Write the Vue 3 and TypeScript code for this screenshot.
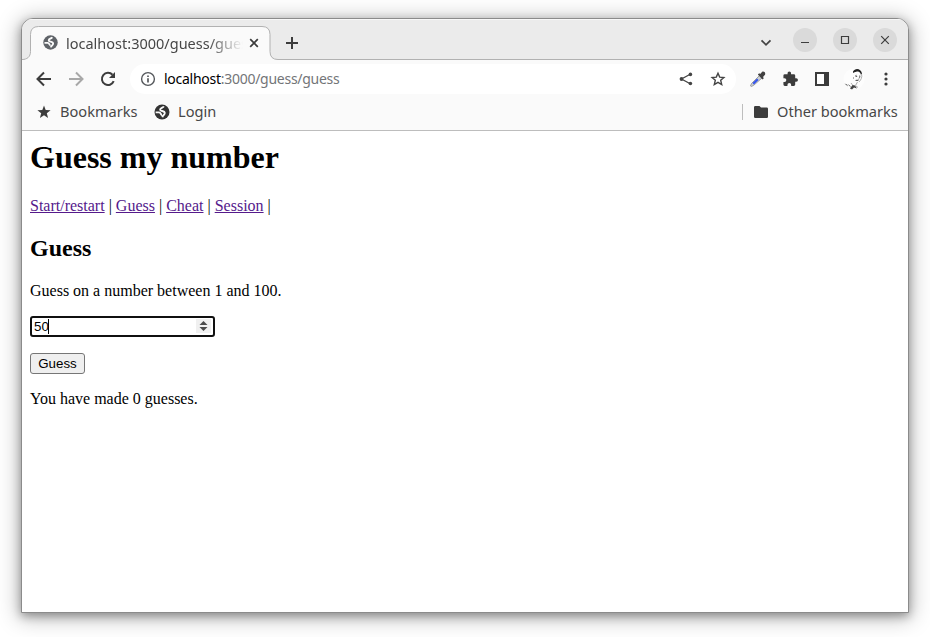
<script setup lang="ts">
import { ref } from 'vue'

const host = 'localhost'
const path = ':3000/guess/guess'
const guess = ref('50')
const guesses = ref(0)
const links: string[] = ['Start/restart', 'Guess', 'Cheat', 'Session']
const continents = 'M14.500 4.500C13 7 9.500 6.500 9.500 9C9.500 11.500 15.500 9.800 15.700 13.500C15.800 16 13 16 12.500 19M3.500 12.500H8C10.500 12.500 10.500 16 12 16'
</script>

<template>
  <div class="desktop">
    <div class="window">
      <header class="strip">
        <svg class="tab-shape" width="256" height="41" viewBox="0 0 256 41">
          <path d="M0 40.5C5 40.5 8.5 38 8.5 32.5V15.5Q8.500 7.500 16.5 7.500H240Q248 7.500 248 15.500V32.5Q248 40.500 256 40.500V41H0Z" fill="#fafafa" />
          <path d="M0 40.500C5 40.500 8.500 38 8.500 32.500V15.500Q8.500 7.500 16.500 7.500H240Q248 7.500 248 15.500V32.500Q248 40.500 256 40.500" fill="none" stroke="#b1b1b1" />
        </svg>
        <div class="tab">
          <svg width="17" height="17" viewBox="0 0 24 24"><circle cx="12" cy="12" r="10.200" fill="#5f6368" /><path :d="continents" fill="none" stroke="#fafafa" stroke-width="2.600" /></svg>
          <span class="title">{{ host }}{{ path }}</span>
          <svg class="close" width="10" height="10" viewBox="0 0 10 10"><path d="M1.200 1.200 8.800 8.800M8.800 1.200 1.200 8.800" stroke="#3c3c3c" stroke-width="1.700" /></svg>
        </div>
        <svg class="plus" width="12" height="12" viewBox="0 0 12 12"><path d="M6 0V12M0 6H12" stroke="#3c3c3c" stroke-width="2" /></svg>
        <div class="controls">
          <svg class="chev" width="12" height="8" viewBox="0 0 12 8"><path d="M1.500 1.300 6 5.800 10.500 1.300" fill="none" stroke="#444" stroke-width="1.800" /></svg>
          <span class="round"><svg width="24" height="24" viewBox="0 0 24 24"><path d="M8 14.500H16" stroke="#3d3d3d" /></svg></span>
          <span class="round"><svg width="24" height="24" viewBox="0 0 24 24"><path d="M8.500 8.500H15.500V15.500H8.500Z" fill="none" stroke="#3d3d3d" stroke-width="1.200" /></svg></span>
          <span class="round"><svg width="24" height="24" viewBox="0 0 24 24"><path d="M8.200 8.200 15.800 15.800M15.800 8.200 8.200 15.800" stroke="#3d3d3d" stroke-width="1.200" /></svg></span>
        </div>
      </header>

      <nav class="toolbar">
        <div class="nav-icons">
          <svg width="16" height="16" viewBox="0 0 16 16"><path d="M15 8H2M8 1.500 1.500 8 8 14.500" fill="none" stroke="#3c3c3c" stroke-width="2" /></svg>
          <svg width="16" height="16" viewBox="0 0 16 16"><path d="M1 8H14M8 1.500 14.500 8 8 14.500" fill="none" stroke="#a8a8a8" stroke-width="2" /></svg>
          <svg width="16" height="16" viewBox="0 0 16 16"><path d="M13.700 10.200A6.100 6.100 0 1 1 12.500 3.800" fill="none" stroke="#3c3c3c" stroke-width="2" /><path d="M15 1V7H9Z" fill="#3c3c3c" /></svg>
        </div>
        <div class="address">
          <svg width="16" height="16" viewBox="0 0 16 16"><circle cx="8" cy="8" r="6.400" fill="none" stroke="#55585c" stroke-width="1.400" /><path d="M8 7.200V11.400M8 4.400V6" stroke="#55585c" stroke-width="1.700" /></svg>
          <span class="url"><b>{{ host }}</b>{{ path }}</span>
          <svg class="share" width="16" height="16" viewBox="0 0 16 16"><path d="M12.200 3.300 3.500 8 12.200 12.700" fill="none" stroke="#444" stroke-width="1.300" /><circle cx="12.400" cy="3.400" r="1.800" fill="#444" /><circle cx="3.500" cy="8" r="1.900" fill="#444" /><circle cx="12.400" cy="12.500" r="1.800" fill="#444" /></svg>
          <svg width="16" height="16" viewBox="0 0 16 16"><path d="M8 2.200 9.700 6.100 13.900 6.500 10.700 9.300 11.700 13.500 8 11.300 4.300 13.500 5.300 9.300 2.100 6.500 6.300 6.100Z" fill="none" stroke="#444" stroke-width="1.400" /></svg>
        </div>
        <div class="extensions">
          <svg width="18" height="18" viewBox="0 0 18 18">
            <path d="M10.500 5.500 13 8 5 15 2.500 16.500 1.500 16 2.500 13.500Z" fill="#cbd0d4" stroke="#8b8b8b" stroke-width=".8" />
            <path d="M8.800 9.300 4.200 13.800" stroke="#3152ef" stroke-width="2" />
            <path d="M8.800 4.600 10.200 3.300 11.200 4 13 2C14.500.700 17 2.500 16 4.800L14 7 14.800 8.200 13.500 9.400Z" fill="#414141" />
          </svg>
          <svg width="18" height="18" viewBox="-1.500 -1 26 26"><path d="M20.500 11H19V7a2 2 0 0 0-2-2h-4V3.500a2.500 2.500 0 0 0-5 0V5H4a2 2 0 0 0-2 2v3.800h1.500a2.700 2.700 0 0 1 0 5.400H2V20a2 2 0 0 0 2 2h3.800v-1.500a2.700 2.700 0 0 1 5.400 0V22H17a2 2 0 0 0 2-2v-4h1.500a2.500 2.500 0 0 0 0-5z" fill="#3c3c3c" /></svg>
          <svg width="18" height="18" viewBox="0 0 18 18"><path d="M2 2H16V16H2Z" fill="#3c3c3c" /><path d="M4 4H11V14H4Z" fill="#fff" /></svg>
          <svg class="avatar" width="22" height="22" viewBox="0 0 22 22">
            <circle cx="11" cy="11" r="10.500" fill="#fdfdfd" />
            <path d="M10 3.500C12-.5 18 0 19 5.500L18 7C17.500 4.500 16 3 14 3.500L11.500 4.200 10 5Z" fill="#222" />
            <path d="M18.500 6C19.500 9 18 12 16 14M12 7.600 14 7.200M16 7.500 17.500 8M10.500 9 10.500 11M12 12.500 15.500 12M17 8 15 13" fill="none" stroke="#b0b0b0" />
            <path d="M12.500 8.400H14.200M16 9H17.200M13 12.400H15" stroke="#555" />
            <path d="M1.500 15.500 4 16.500 5 18.500ZM4.500 16 7 17.500 8 19.500ZM7 20.500 9.500 17 12 17.500 14 20.500 11 19.500 9 21.500Z" fill="#444" />
            <path d="M8 15 9.500 17M14.500 14 12.500 17.500 15 19.500" fill="none" stroke="#aaa" />
          </svg>
          <svg class="dots" width="4" height="14" viewBox="0 0 4 14"><circle cx="2" cy="2" r="1.600" fill="#3c3c3c" /><circle cx="2" cy="7" r="1.600" fill="#3c3c3c" /><circle cx="2" cy="12" r="1.600" fill="#3c3c3c" /></svg>
        </div>
      </nav>

      <nav class="bookmarks">
        <svg width="16" height="16" viewBox="0 0 16 16"><path d="M8 1.400 9.700 5.900 14.600 6.200 10.800 9.200 12.100 13.900 8 11.200 3.900 13.900 5.200 9.200 1.400 6.200 6.300 5.900Z" fill="#3c3c3c" /></svg>
        <span class="bm-one">Bookmarks</span>
        <svg class="bm-globe" width="18" height="18" viewBox="0 0 24 24"><circle cx="12" cy="12" r="10" fill="#333" /><path :d="continents" fill="none" stroke="#fafafa" stroke-width="2.500" /></svg>
        <span class="bm-two">Login</span>
        <i class="rule"></i>
        <svg class="folder" width="14" height="12" viewBox="0 0 14 12"><path d="M1.300 0H5.500L7 1.500H12.700Q14 1.500 14 2.800V10.700Q14 12 12.700 12H1.300Q0 12 0 10.700V1.300Q0 0 1.300 0Z" fill="#3c3c3c" /></svg>
        <span class="bm-other">Other bookmarks</span>
      </nav>

      <main class="page">
        <h1>Guess my number</h1>
        <div class="links"><template v-for="link in links" :key="link"><a href="#">{{ link }}</a> |{{ ' ' }}</template></div>
        <h2>Guess</h2>
        <p>Guess on a number between 1 and 100.</p>
        <div class="field">
          <input v-model="guess" type="text" inputmode="numeric" />
          <i class="caret"></i>
          <svg width="15" height="14" viewBox="0 0 15 14"><path d="M0 0H15V14H0Z" fill="#f0f0f0" /><path d="M3.500 6 7.500 2 11.500 6ZM3.500 8 7.500 12 11.500 8Z" fill="#4b4b4b" /></svg>
        </div>
        <button type="button" @click="guesses++">Guess</button>
        <p class="count">You have made {{ guesses }} guesses.</p>
      </main>
    </div>
  </div>
</template>

<style>
body { margin: 0; background: #fff; }
</style>

<style scoped>
* { box-sizing: border-box; }
svg { display: block; flex: none; }
.desktop { width: 930px; height: 637px; padding: 18px 21px 24px; overflow: hidden; background: #fff; }
.window { height: 595px; border: 1px solid #8b8b8b; border-radius: 12px 12px 0 0; overflow: hidden; background: #fff; box-shadow: 0 3px 10px rgba(0,0,0,.32), 0 3px 22px 2px rgba(0,0,0,.28); display: flex; flex-direction: column; }
.strip { position: relative; flex: none; height: 41px; background: #ebebeb; box-shadow: inset 0 1px #f8f8f8, inset 0 -1px #b1b1b1; display: flex; align-items: center; font-family: "Noto Sans", sans-serif; }
.tab-shape { position: absolute; left: 0; top: 0; }
.tab { position: relative; display: flex; align-items: center; width: 240px; height: 34px; margin: 6px 0 0 8px; padding-left: 12px; }
.title { width: 177px; margin-left: 7px; margin-right: 6px; overflow: hidden; white-space: nowrap; font-size: 14.5px; line-height: 20px; color: #474747; mask-image: linear-gradient(to right, #000 142px, transparent 177px); }
.plus { margin: 7px 0 0 16px; }
.controls { display: flex; align-items: center; gap: 16px; margin: 0 11px 0 auto; }
.chev { margin: 6px 5px 0 0; }
.round { display: block; width: 24px; height: 24px; border-radius: 50%; background: #dadada; }
.toolbar { flex: none; height: 38px; display: flex; align-items: center; background: #fafafa; padding-left: 14px; font-family: "Noto Sans", sans-serif; }
.nav-icons { display: flex; gap: 16px; }
.address { width: 606px; height: 30px; margin-left: 14px; padding: 0 10px; border-radius: 15px; background: #fff; display: flex; align-items: center; }
.url { margin-left: 8px; font-size: 14px; line-height: 20px; letter-spacing: -.27px; color: #737578; white-space: nowrap; }
.url b { color: #000; font-weight: 400; }
.share { margin-left: auto; margin-right: 16px; }
.extensions { display: flex; align-items: center; gap: 14px; margin-left: 13px; }
.avatar { margin-left: -2px; }
.dots { margin-left: 5px; }
.bookmarks { flex: none; height: 33px; display: flex; align-items: center; background: #fafafa; border-bottom: 1px solid #bdbdbd; padding: 0 10px 5px 14px; color: #474747; font: 14.6px/20px "Noto Sans", sans-serif; white-space: nowrap; }
.bookmarks span { margin-top: -1px; }
.bm-one { width: 78px; margin-left: 8px; }
.bm-globe { margin-left: 15px; }
.bm-two { width: 39px; margin-left: 7px; }
.rule { width: 1px; height: 16px; margin-left: auto; background: #bdbdbd; }
.folder { margin-left: 11px; }
.bm-other { width: 121px; margin-left: 9px; }
.page { padding: 8px; font: 16px/18px "Liberation Serif", serif; color: #000; }
h1 { margin: 0 0 21px; font-size: 32px; line-height: 37px; }
.links { height: 18px; }
a { color: #551a8b; }
h2 { margin: 20px 0; font-size: 24px; line-height: 27px; }
p { margin: 0 0 16px; }
.field { position: relative; display: flex; align-items: center; width: 185px; height: 21px; margin-bottom: 16px; padding: 0 2px; border: 2px solid #101010; border-radius: 3px; background: #fff; }
.field svg { margin: -2px 0 0 auto; }
input { width: 155px; height: 17px; padding: 0; border: 0; outline: 0; background: transparent; font: 13.333px/17px "Liberation Sans", sans-serif; color: #000; }
.caret { position: absolute; left: 16px; top: 1px; width: 1px; height: 15px; background: #000; }
button { display: block; width: 55px; height: 21px; margin: 0 0 16px; padding: 0; border: 1px solid #767676; border-radius: 3px; background: #efefef; font: 13.333px/17px "Liberation Sans", sans-serif; color: #000; }
</style>
